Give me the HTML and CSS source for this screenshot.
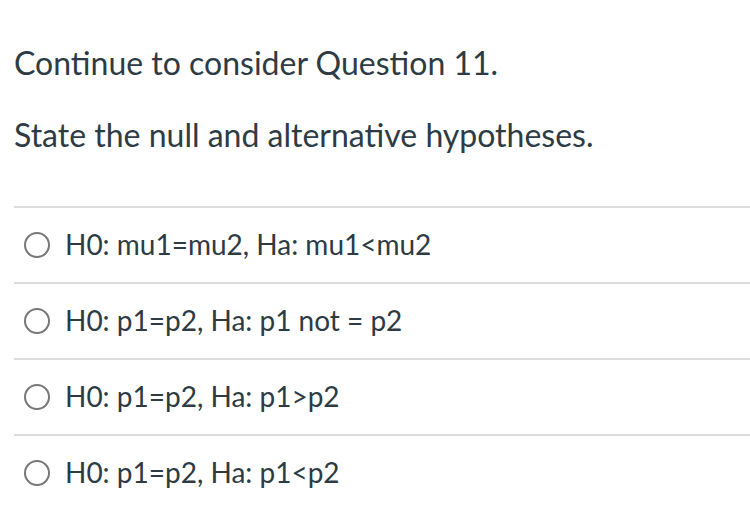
FILE: index.html
```html
<!DOCTYPE html>
<html>
<head>
<meta charset="utf-8">
<link rel="stylesheet" href="styles.css">
</head>
<body>
<div class="question">
  <p class="text">Continue to consider Question 11.</p>
  <p class="text">State the null and alternative hypotheses.</p>
  <div class="answers">
    <label class="answer"><span class="radio"></span><span class="label">H0: mu1=mu2, Ha: mu1&lt;mu2</span></label>
    <label class="answer"><span class="radio"></span><span class="label">H0: p1=p2, Ha: p1 not = p2</span></label>
    <label class="answer"><span class="radio"></span><span class="label">H0: p1=p2, Ha: p1&gt;p2</span></label>
    <label class="answer"><span class="radio"></span><span class="label">H0: p1=p2, Ha: p1&lt;p2</span></label>
  </div>
</div>
</body>
</html>
```
FILE: styles.css
```css
html, body {
  margin: 0;
  padding: 0;
  background: #ffffff;
}
body {
  font-family: Lato, "Liberation Sans", sans-serif;
  color: #2d3b45;
}
.question {
  padding: 43px 0 0 14px;
}
.text {
  margin: 0 0 32px 0;
  font-size: 32px;
  line-height: 40px;
}
.text + .text {
  margin-bottom: 51px;
}
.answer {
  display: flex;
  align-items: center;
  height: 74px;
  border-top: 2px solid #dcdcdc;
  font-size: 28px;
}
.label {
  padding-bottom: 2px;
}
.radio {
  width: 22px;
  height: 22px;
  border: 2px solid #777777;
  border-radius: 50%;
  margin-left: 10px;
  margin-right: 15px;
  flex: none;
}
```
